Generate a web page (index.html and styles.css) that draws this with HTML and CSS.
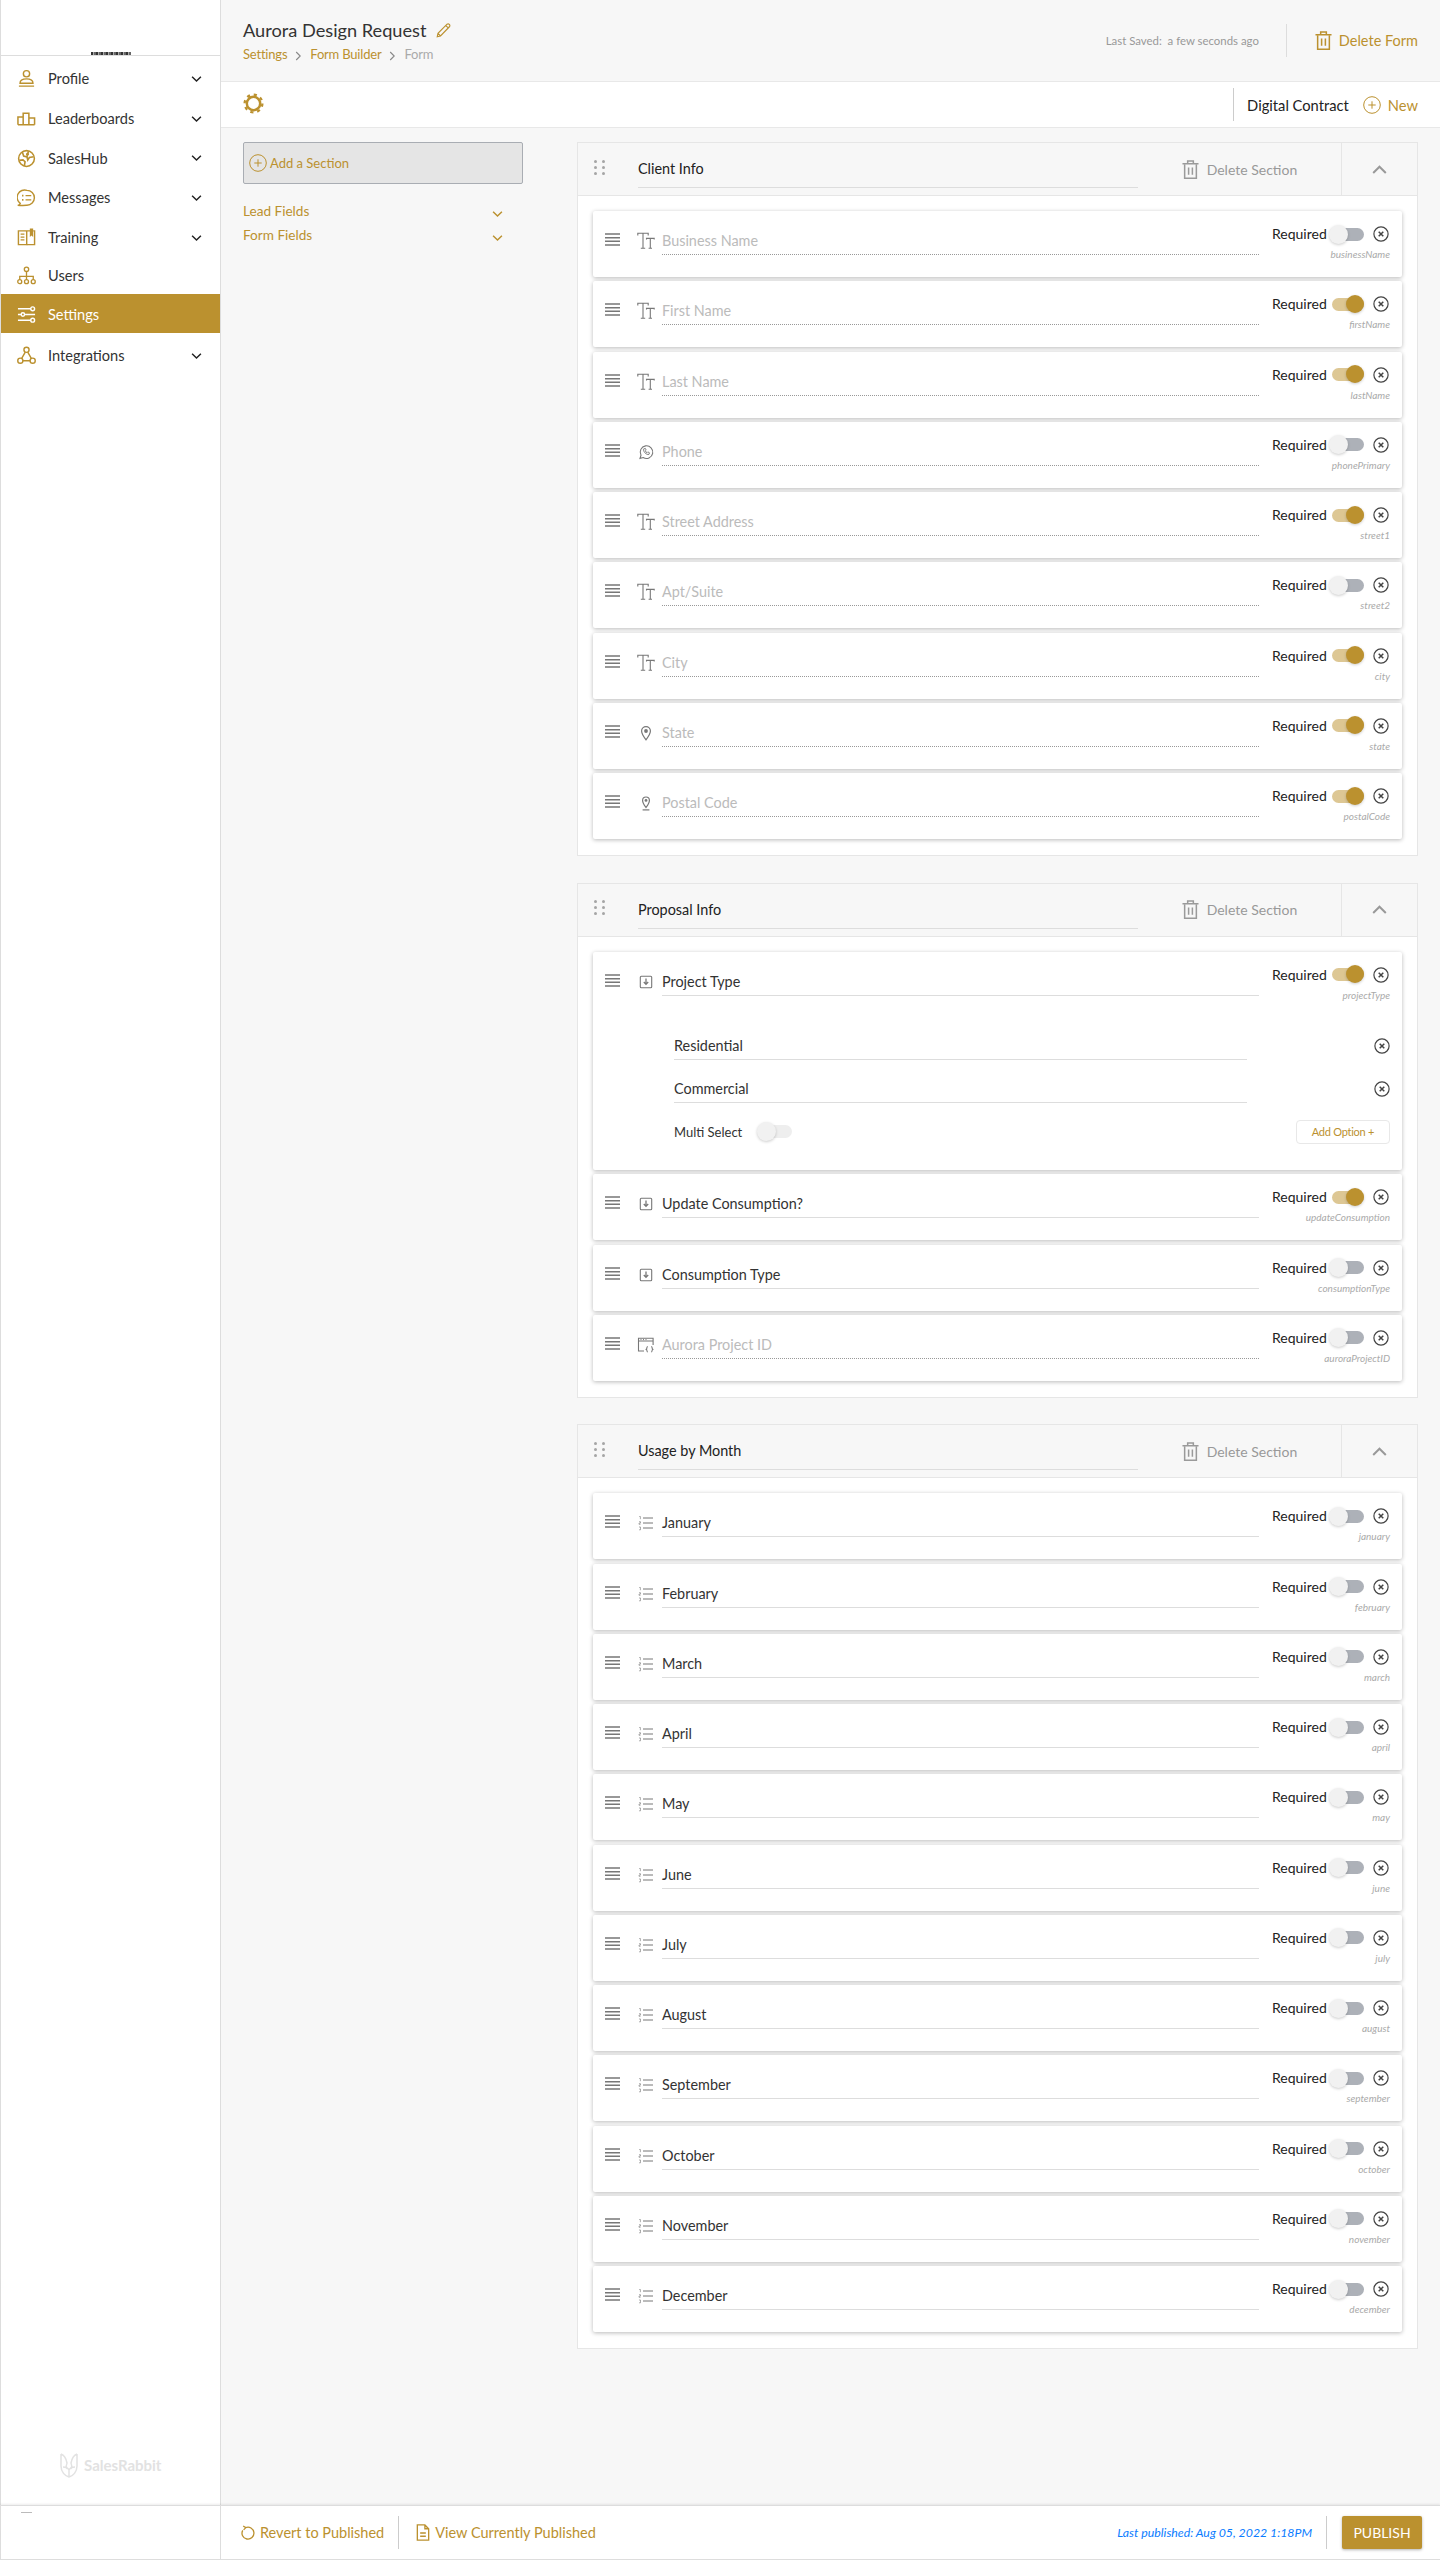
FILE: index.html
```html
<!DOCTYPE html>
<html lang="en">
<head>
<meta charset="utf-8">
<title>Aurora Design Request</title>
<link rel="stylesheet" href="styles.css">
</head>
<body>
<svg class="sprite" width="0" height="0" aria-hidden="true">
  <symbol id="i-handle" viewBox="0 0 15 13"><path d="M0 1h15M0 4.7h15M0 8.3h15M0 12h15" stroke="currentColor" stroke-width="1.6"/></symbol>
  <symbol id="i-dots" viewBox="0 0 11 15"><g fill="currentColor"><circle cx="1.5" cy="1.5" r="1.5"/><circle cx="9.5" cy="1.5" r="1.5"/><circle cx="1.5" cy="7.5" r="1.5"/><circle cx="9.5" cy="7.5" r="1.5"/><circle cx="1.5" cy="13.5" r="1.5"/><circle cx="9.5" cy="13.5" r="1.5"/></g></symbol>
  <symbol id="i-text" viewBox="0 0 18 18"><path d="M.8 3.4V1.2h10.4v2.2M6 1.2v14.6M3.800 16.200h4.400M9.500 7.600V6.400h7.700v1.200M13.300 6.400v9.400M11.600 16.200h3.400" fill="none" stroke="currentColor" stroke-width="1.100"/></symbol>
  <symbol id="i-phone" viewBox="0 0 18 18"><path d="M3 15.400l1-3.200A6.300 6.300 0 1 1 6.200 14.500z" fill="none" stroke="currentColor" stroke-width="1.100"/><path d="M6.700 5.900c-.9 2.500 2.600 6.300 5.300 5.500l.5-1.600-1.700-.9-.8.800c-.8-.4-1.400-1-1.700-1.900l.8-.7-.7-1.700z" fill="none" stroke="currentColor" stroke-width=".9"/></symbol>
  <symbol id="i-pin" viewBox="0 0 18 18"><path d="M9 15.800C6.600 12.600 4.600 10 4.600 7A4.400 4.400 0 0 1 13.400 7C13.400 10 11.400 12.600 9 15.800z" fill="none" stroke="currentColor" stroke-width="1.200"/><circle cx="9" cy="7" r="1.900" fill="currentColor"/></symbol>
  <symbol id="i-postal" viewBox="0 0 18 18"><path d="M9 13.400C7.200 11 5.600 9 5.600 6.400A3.400 3.400 0 0 1 12.400 6.400C12.400 9 10.800 11 9 13.400z" fill="none" stroke="currentColor" stroke-width="1.200"/><circle cx="9" cy="6.400" r="1.400" fill="currentColor"/><path d="M5.600 15.900h6.800" stroke="currentColor" stroke-width="1.200"/></symbol>
  <symbol id="i-select" viewBox="0 0 18 18"><rect x="3.300" y="3.300" width="11.400" height="11.400" rx="1" fill="none" stroke="currentColor" stroke-width="1.100"/><path d="M9 5.600v5.600M6.800 9l2.200 2.400L11.200 9" fill="none" stroke="currentColor" stroke-width="1.300"/></symbol>
  <symbol id="i-api" viewBox="0 0 18 18"><path d="M7 15H1.500V2.200h14.600V9M1.500 5h14.600" fill="none" stroke="currentColor" stroke-width="1.100"/><path d="M3.500 3.600h1M6 3.600h1M8.500 3.600h1" stroke="currentColor"/><path d="M10.800 10.500c-1.300 0-.6 2.300-1.500 2.700.9.400.2 2.700 1.500 2.700M14.200 10.500c1.300 0 .6 2.300 1.500 2.700-.9.400-.2 2.700-1.500 2.700" fill="none" stroke="currentColor" stroke-width="1.100"/></symbol>
  <symbol id="i-list" viewBox="0 0 18 18"><path d="M6 4h10M6 9h10M6 14h10" stroke="currentColor" stroke-width="1"/><path d="M2.200 2.500h1.200v2.700M2 7.700h1.500v1.400H2v1.200h1.500M2 13h1.500v2.800H2" fill="none" stroke="currentColor" stroke-width=".6"/></symbol>
  <symbol id="i-close" viewBox="0 0 16 16"><circle cx="8" cy="8" r="7.100" fill="none" stroke="currentColor" stroke-width="1.200"/><path d="M5.700 5.700l4.600 4.600M10.300 5.700l-4.600 4.600" stroke="currentColor" stroke-width="1.500"/></symbol>
  <symbol id="i-trash" viewBox="0 0 18 20"><path d="M.5 4h17M6 3.600V1h6v2.600" fill="none" stroke="currentColor" stroke-width="1.600"/><path d="M2.800 4.400v14.800h12.400V4.400" fill="none" stroke="currentColor" stroke-width="1.600"/><path d="M7 8v7.500M11 8v7.500" stroke="currentColor" stroke-width="1.600"/></symbol>
  <symbol id="i-plus" viewBox="0 0 18 18"><circle cx="9" cy="9" r="8.300" fill="none" stroke="currentColor"/><path d="M9 5.300v7.400M5.300 9h7.400" stroke="currentColor"/></symbol>
  <symbol id="i-down" viewBox="0 0 12 8"><path d="M1.200 1.500L6 6.200l4.800-4.700" fill="none" stroke="currentColor" stroke-width="1.600"/></symbol>
  <symbol id="i-up" viewBox="0 0 15 9"><path d="M1.200 8L7.500 1.700 13.800 8" fill="none" stroke="currentColor" stroke-width="2"/></symbol>
  <symbol id="i-right" viewBox="0 0 7 10"><path d="M1.200 1l4 4-4 4" fill="none" stroke="currentColor" stroke-width="1.100"/></symbol>
  <symbol id="n-profile" viewBox="0 0 20 20"><circle cx="10" cy="5" r="3.300" fill="none" stroke="currentColor" stroke-width="1.500"/><path d="M3.200 15c0-3.500 3-4.600 6.800-4.600s6.800 1.100 6.800 4.600zM2 18h16" fill="none" stroke="currentColor" stroke-width="1.500"/></symbol>
  <symbol id="n-board" viewBox="0 0 20 20"><path d="M1 16.500v-8h5.500v8M6.500 16.500v-12h6v12M12.500 16.500v-7h6v7M1 16.500h17.500" fill="none" stroke="currentColor" stroke-width="1.600"/></symbol>
  <symbol id="n-hub" viewBox="0 0 20 20"><circle cx="10" cy="10" r="8.300" fill="none" stroke="currentColor" stroke-width="1.600"/><path d="M5.500 3l1.500 4.500 3.500.8.800 3.200 1.700-2.600 4.500-.7M10.500 8.300L12 2.500M2.500 12l3.800-.6 2.200 2-.8 4.400" fill="none" stroke="currentColor" stroke-width="1.700"/><circle cx="11" cy="5.500" r="1.500" fill="currentColor"/></symbol>
  <symbol id="n-msg" viewBox="0 0 20 20"><path d="M.8 18.300c1.300-.4 2.200-1.100 2.600-2.100A7.800 7.800 0 0 1 10.500 2.500 7.800 7.800 0 1 1 10.500 18.100C7 18.300 4 18.500.8 18.300z" fill="none" stroke="currentColor" stroke-width="1.500"/><path d="M9 8h6M9 12.500h6" stroke="currentColor" stroke-width="1.500"/><path d="M5.300 8h1.500M5.300 12.500h1.500" stroke="currentColor" stroke-width="1.800"/></symbol>
  <symbol id="n-book" viewBox="0 0 20 20"><path d="M14 3H10.200v14.500H1.500V3H10" fill="none" stroke="currentColor" stroke-width="1.500"/><path d="M10.200 17.500h8.300V3H17" fill="none" stroke="currentColor" stroke-width="1.500"/><path d="M13.500 .5h3.500v9l-1.800-1.500-1.700 1.500z" fill="currentColor"/><path d="M3.800 6.500h4M3.800 9.500h4M3.800 12.500h4" stroke="currentColor" stroke-width="1.300"/></symbol>
  <symbol id="n-users" viewBox="0 0 20 20"><circle cx="10" cy="3.500" r="2.300" fill="none" stroke="currentColor" stroke-width="1.400"/><circle cx="2.900" cy="16.500" r="2.100" fill="none" stroke="currentColor" stroke-width="1.400"/><circle cx="10" cy="16.500" r="2.100" fill="none" stroke="currentColor" stroke-width="1.400"/><circle cx="17.100" cy="16.500" r="2.100" fill="none" stroke="currentColor" stroke-width="1.400"/><path d="M10 5.800v8.600M2.900 14.400v-3.400h14.200v3.400" fill="none" stroke="currentColor" stroke-width="1.400"/></symbol>
  <symbol id="n-sliders" viewBox="0 0 20 20"><g fill="none" stroke="currentColor" stroke-width="1.500"><path d="M1 4h13.500M1 10h3.500M8 10h11M1 16h13.500"/><circle cx="16.500" cy="4" r="2"/><circle cx="6.200" cy="10" r="1.800"/><circle cx="16.500" cy="16" r="2"/></g></symbol>
  <symbol id="n-net" viewBox="0 0 20 20"><g fill="none" stroke="currentColor" stroke-width="1.500"><circle cx="10" cy="4" r="2.700"/><circle cx="3.500" cy="15.500" r="2.700"/><circle cx="16.500" cy="15.500" r="2.700"/><path d="M8.700 6.400l-3.900 6.800M11.300 6.400l3.900 6.800M6.200 15.500h7.600"/></g></symbol>
  <symbol id="i-pencil" viewBox="0 0 16 16"><path d="M1.300 14.700l.8-3.700L11.800 1.300c.8-.6 1.700-.5 2.400.2.700.8.800 1.700.1 2.500L4.800 13.800zM10.500 2.700l2.800 2.800M2.100 11l2.700 2.800" fill="none" stroke="currentColor" stroke-width="1.200"/></symbol>
  <symbol id="i-gear" viewBox="0 0 22 22"><circle cx="11" cy="11" r="7" fill="none" stroke="currentColor" stroke-width="2.600"/><circle cx="11" cy="11" r="9.300" fill="none" stroke="currentColor" stroke-width="2.400" stroke-dasharray="3.300 4"/></symbol>
  <symbol id="i-revert" viewBox="0 0 16 18"><path d="M5.300 3.500A6.800 6.800 0 1 1 2 6.500M2.500 1.500L5.500 3.500 3 6" fill="none" stroke="currentColor" stroke-width="1.500"/></symbol>
  <symbol id="i-doc" viewBox="0 0 14 18"><path d="M1 1h8l4 4v12H1zM9 1v4h4" fill="none" stroke="currentColor" stroke-width="1.400"/><path d="M4 9.500h6M4 13h6" stroke="currentColor" stroke-width="1.400"/></symbol>
  <symbol id="i-rabbit" viewBox="0 0 18 26"><path d="M1 2c3 1 5 4 6 9-1 2-1 4 0 6M17 2c-3 1-5 4-6 9 1 2 1 4 0 6M1 2v12c0 6 4 10 8 11 4-1 8-5 8-11V2M9 25v-7M3 15c3 0 5 1 6 3 1-2 3-3 6-3" fill="none" stroke="currentColor" stroke-width="1.500"/></symbol>
</svg>

<div class="app">
  <div class="top">
    <aside class="sidebar">
      <div class="brand"><span class="brand-strip"></span></div>
      <nav class="nav">
        <a class="nav-item"><svg class="nav-icon"><use href="#n-profile"/></svg><span class="nav-label">Profile</span><svg class="nav-chev"><use href="#i-down"/></svg></a>
        <a class="nav-item"><svg class="nav-icon"><use href="#n-board"/></svg><span class="nav-label">Leaderboards</span><svg class="nav-chev"><use href="#i-down"/></svg></a>
        <a class="nav-item"><svg class="nav-icon"><use href="#n-hub"/></svg><span class="nav-label">SalesHub</span><svg class="nav-chev"><use href="#i-down"/></svg></a>
        <a class="nav-item"><svg class="nav-icon"><use href="#n-msg"/></svg><span class="nav-label">Messages</span><svg class="nav-chev"><use href="#i-down"/></svg></a>
        <a class="nav-item"><svg class="nav-icon"><use href="#n-book"/></svg><span class="nav-label">Training</span><svg class="nav-chev"><use href="#i-down"/></svg></a>
        <a class="nav-item nav-plain"><svg class="nav-icon"><use href="#n-users"/></svg><span class="nav-label">Users</span></a>
        <a class="nav-item nav-active"><svg class="nav-icon"><use href="#n-sliders"/></svg><span class="nav-label">Settings</span></a>
        <a class="nav-item nav-last"><svg class="nav-icon"><use href="#n-net"/></svg><span class="nav-label">Integrations</span><svg class="nav-chev"><use href="#i-down"/></svg></a>
      </nav>
      <div class="side-logo"><svg class="rabbit"><use href="#i-rabbit"/></svg><span>SalesRabbit</span></div>
    </aside>

    <main class="main">
      <header class="header">
        <div class="header-left">
          <div class="title-row"><h1 class="title">Aurora Design Request</h1><svg class="pencil"><use href="#i-pencil"/></svg></div>
          <div class="crumbs"><a>Settings</a><svg class="crumb-sep"><use href="#i-right"/></svg><a>Form Builder</a><svg class="crumb-sep"><use href="#i-right"/></svg><span>Form</span></div>
        </div>
        <div class="header-right">
          <span class="saved">Last Saved:&nbsp; a few seconds ago</span>
          <a class="delete-form"><svg class="trash-lg"><use href="#i-trash"/></svg>Delete Form</a>
        </div>
      </header>

      <div class="toolbar">
        <svg class="gear"><use href="#i-gear"/></svg>
        <div class="toolbar-right"><span class="contract">Digital Contract</span><svg class="plus"><use href="#i-plus"/></svg><a class="new">New</a></div>
      </div>

      <div class="content">
        <div class="left">
          <div class="add-section"><svg class="plus"><use href="#i-plus"/></svg><span>Add a Section</span></div>
          <div class="group-link"><span>Lead Fields</span><svg class="group-chev"><use href="#i-down"/></svg></div>
          <div class="group-link"><span>Form Fields</span><svg class="group-chev"><use href="#i-down"/></svg></div>
        </div>

        <div class="sections">
          <section class="section">
            <div class="sec-head"><svg class="dots"><use href="#i-dots"/></svg><div class="sec-title">Client Info</div><div class="sec-del"><svg class="trash"><use href="#i-trash"/></svg>Delete Section</div><div class="sec-toggle"><svg class="up"><use href="#i-up"/></svg></div></div>
            <div class="sec-body">
              <div class="card"><svg class="handle"><use href="#i-handle"/></svg><svg class="type"><use href="#i-text"/></svg><div class="field ph">Business Name</div><div class="side"><div class="side-row"><span class="req">Required</span><span class="toggle"></span><svg class="close"><use href="#i-close"/></svg></div><div class="key">businessName</div></div></div>
              <div class="card"><svg class="handle"><use href="#i-handle"/></svg><svg class="type"><use href="#i-text"/></svg><div class="field ph">First Name</div><div class="side"><div class="side-row"><span class="req">Required</span><span class="toggle on"></span><svg class="close"><use href="#i-close"/></svg></div><div class="key">firstName</div></div></div>
              <div class="card"><svg class="handle"><use href="#i-handle"/></svg><svg class="type"><use href="#i-text"/></svg><div class="field ph">Last Name</div><div class="side"><div class="side-row"><span class="req">Required</span><span class="toggle on"></span><svg class="close"><use href="#i-close"/></svg></div><div class="key">lastName</div></div></div>
              <div class="card"><svg class="handle"><use href="#i-handle"/></svg><svg class="type"><use href="#i-phone"/></svg><div class="field ph">Phone</div><div class="side"><div class="side-row"><span class="req">Required</span><span class="toggle"></span><svg class="close"><use href="#i-close"/></svg></div><div class="key">phonePrimary</div></div></div>
              <div class="card"><svg class="handle"><use href="#i-handle"/></svg><svg class="type"><use href="#i-text"/></svg><div class="field ph">Street Address</div><div class="side"><div class="side-row"><span class="req">Required</span><span class="toggle on"></span><svg class="close"><use href="#i-close"/></svg></div><div class="key">street1</div></div></div>
              <div class="card"><svg class="handle"><use href="#i-handle"/></svg><svg class="type"><use href="#i-text"/></svg><div class="field ph">Apt/Suite</div><div class="side"><div class="side-row"><span class="req">Required</span><span class="toggle"></span><svg class="close"><use href="#i-close"/></svg></div><div class="key">street2</div></div></div>
              <div class="card"><svg class="handle"><use href="#i-handle"/></svg><svg class="type"><use href="#i-text"/></svg><div class="field ph">City</div><div class="side"><div class="side-row"><span class="req">Required</span><span class="toggle on"></span><svg class="close"><use href="#i-close"/></svg></div><div class="key">city</div></div></div>
              <div class="card"><svg class="handle"><use href="#i-handle"/></svg><svg class="type"><use href="#i-pin"/></svg><div class="field ph">State</div><div class="side"><div class="side-row"><span class="req">Required</span><span class="toggle on"></span><svg class="close"><use href="#i-close"/></svg></div><div class="key">state</div></div></div>
              <div class="card"><svg class="handle"><use href="#i-handle"/></svg><svg class="type"><use href="#i-postal"/></svg><div class="field ph">Postal Code</div><div class="side"><div class="side-row"><span class="req">Required</span><span class="toggle on"></span><svg class="close"><use href="#i-close"/></svg></div><div class="key">postalCode</div></div></div>
            </div>
          </section>

          <section class="section">
            <div class="sec-head"><svg class="dots"><use href="#i-dots"/></svg><div class="sec-title">Proposal Info</div><div class="sec-del"><svg class="trash"><use href="#i-trash"/></svg>Delete Section</div><div class="sec-toggle"><svg class="up"><use href="#i-up"/></svg></div></div>
            <div class="sec-body">
              <div class="card card-open">
                <div class="card-main"><svg class="handle"><use href="#i-handle"/></svg><svg class="type"><use href="#i-select"/></svg><div class="field">Project Type</div><div class="side"><div class="side-row"><span class="req">Required</span><span class="toggle on"></span><svg class="close"><use href="#i-close"/></svg></div><div class="key">projectType</div></div></div>
                <div class="options">
                  <div class="option"><div class="opt-field">Residential</div><svg class="close"><use href="#i-close"/></svg></div>
                  <div class="option"><div class="opt-field">Commercial</div><svg class="close"><use href="#i-close"/></svg></div>
                  <div class="opt-foot"><span class="multi">Multi Select</span><span class="toggle pale"></span><button class="add-opt">Add Option +</button></div>
                </div>
              </div>
              <div class="card"><svg class="handle"><use href="#i-handle"/></svg><svg class="type"><use href="#i-select"/></svg><div class="field">Update Consumption?</div><div class="side"><div class="side-row"><span class="req">Required</span><span class="toggle on"></span><svg class="close"><use href="#i-close"/></svg></div><div class="key">updateConsumption</div></div></div>
              <div class="card"><svg class="handle"><use href="#i-handle"/></svg><svg class="type"><use href="#i-select"/></svg><div class="field">Consumption Type</div><div class="side"><div class="side-row"><span class="req">Required</span><span class="toggle"></span><svg class="close"><use href="#i-close"/></svg></div><div class="key">consumptionType</div></div></div>
              <div class="card"><svg class="handle"><use href="#i-handle"/></svg><svg class="type"><use href="#i-api"/></svg><div class="field ph">Aurora Project ID</div><div class="side"><div class="side-row"><span class="req">Required</span><span class="toggle"></span><svg class="close"><use href="#i-close"/></svg></div><div class="key">auroraProjectID</div></div></div>
            </div>
          </section>

          <section class="section">
            <div class="sec-head"><svg class="dots"><use href="#i-dots"/></svg><div class="sec-title">Usage by Month</div><div class="sec-del"><svg class="trash"><use href="#i-trash"/></svg>Delete Section</div><div class="sec-toggle"><svg class="up"><use href="#i-up"/></svg></div></div>
            <div class="sec-body">
              <div class="card"><svg class="handle"><use href="#i-handle"/></svg><svg class="type"><use href="#i-list"/></svg><div class="field">January</div><div class="side"><div class="side-row"><span class="req">Required</span><span class="toggle"></span><svg class="close"><use href="#i-close"/></svg></div><div class="key">january</div></div></div>
              <div class="card"><svg class="handle"><use href="#i-handle"/></svg><svg class="type"><use href="#i-list"/></svg><div class="field">February</div><div class="side"><div class="side-row"><span class="req">Required</span><span class="toggle"></span><svg class="close"><use href="#i-close"/></svg></div><div class="key">february</div></div></div>
              <div class="card"><svg class="handle"><use href="#i-handle"/></svg><svg class="type"><use href="#i-list"/></svg><div class="field">March</div><div class="side"><div class="side-row"><span class="req">Required</span><span class="toggle"></span><svg class="close"><use href="#i-close"/></svg></div><div class="key">march</div></div></div>
              <div class="card"><svg class="handle"><use href="#i-handle"/></svg><svg class="type"><use href="#i-list"/></svg><div class="field">April</div><div class="side"><div class="side-row"><span class="req">Required</span><span class="toggle"></span><svg class="close"><use href="#i-close"/></svg></div><div class="key">april</div></div></div>
              <div class="card"><svg class="handle"><use href="#i-handle"/></svg><svg class="type"><use href="#i-list"/></svg><div class="field">May</div><div class="side"><div class="side-row"><span class="req">Required</span><span class="toggle"></span><svg class="close"><use href="#i-close"/></svg></div><div class="key">may</div></div></div>
              <div class="card"><svg class="handle"><use href="#i-handle"/></svg><svg class="type"><use href="#i-list"/></svg><div class="field">June</div><div class="side"><div class="side-row"><span class="req">Required</span><span class="toggle"></span><svg class="close"><use href="#i-close"/></svg></div><div class="key">june</div></div></div>
              <div class="card"><svg class="handle"><use href="#i-handle"/></svg><svg class="type"><use href="#i-list"/></svg><div class="field">July</div><div class="side"><div class="side-row"><span class="req">Required</span><span class="toggle"></span><svg class="close"><use href="#i-close"/></svg></div><div class="key">july</div></div></div>
              <div class="card"><svg class="handle"><use href="#i-handle"/></svg><svg class="type"><use href="#i-list"/></svg><div class="field">August</div><div class="side"><div class="side-row"><span class="req">Required</span><span class="toggle"></span><svg class="close"><use href="#i-close"/></svg></div><div class="key">august</div></div></div>
              <div class="card"><svg class="handle"><use href="#i-handle"/></svg><svg class="type"><use href="#i-list"/></svg><div class="field">September</div><div class="side"><div class="side-row"><span class="req">Required</span><span class="toggle"></span><svg class="close"><use href="#i-close"/></svg></div><div class="key">september</div></div></div>
              <div class="card"><svg class="handle"><use href="#i-handle"/></svg><svg class="type"><use href="#i-list"/></svg><div class="field">October</div><div class="side"><div class="side-row"><span class="req">Required</span><span class="toggle"></span><svg class="close"><use href="#i-close"/></svg></div><div class="key">october</div></div></div>
              <div class="card"><svg class="handle"><use href="#i-handle"/></svg><svg class="type"><use href="#i-list"/></svg><div class="field">November</div><div class="side"><div class="side-row"><span class="req">Required</span><span class="toggle"></span><svg class="close"><use href="#i-close"/></svg></div><div class="key">november</div></div></div>
              <div class="card"><svg class="handle"><use href="#i-handle"/></svg><svg class="type"><use href="#i-list"/></svg><div class="field">December</div><div class="side"><div class="side-row"><span class="req">Required</span><span class="toggle"></span><svg class="close"><use href="#i-close"/></svg></div><div class="key">december</div></div></div>
            </div>
          </section>
        </div>
      </div>
    </main>
  </div>

  <footer class="footer">
    <div class="foot-side"><span class="foot-dash"></span></div>
    <div class="foot-main">
      <a class="foot-link foot-revert"><svg class="foot-icon"><use href="#i-revert"/></svg>Revert to Published</a>
      <a class="foot-link foot-view"><svg class="foot-icon"><use href="#i-doc"/></svg>View Currently Published</a>
      <span class="published">Last published: Aug 05, 2022 1:18PM</span>
      <button class="publish">PUBLISH</button>
    </div>
  </footer>
</div>
</body>
</html>
```

FILE: styles.css
```css
* { box-sizing: border-box; }
html, body { margin: 0; padding: 0; }
body { font-family: Lato, "Open Sans", sans-serif; color: #333; background: #f7f7f7; font-size: 14.4px; }
svg { display: block; flex: none; }
.sprite { position: absolute; }
a { cursor: pointer; }
h1 { margin: 0; font-weight: 400; }

.app { display: flex; flex-direction: column; height: 2560px; overflow: hidden; }
.top { display: flex; flex: 1; min-height: 0; }

/* sidebar */
.sidebar { width: 221px; flex: none; display: flex; flex-direction: column; background: #fff; border-left: 1px solid #ddd; border-right: 1px solid #ddd; }
.brand { height: 56px; flex: none; border-bottom: 1px solid #ddd; display: flex; justify-content: center; align-items: flex-end; }
.brand-strip { width: 40px; height: 3px; background: repeating-linear-gradient(90deg, #333 0 2px, #aaa 2px 3px, #666 3px 5px); }
.nav { padding-top: 3px; display: flex; flex-direction: column; }
.nav-item { height: 39.7px; display: flex; align-items: center; padding: 0 18px 0 16px; color: #333; }
.nav-plain { height: 36.5px; }
.nav-active { height: 39px; background: #bb912f; color: #fff; padding-top: 2px; }
.nav-active .nav-icon { color: #fff; }
.nav-last { margin-top: 3px; }
.nav-icon { width: 19px; height: 19px; color: #bb912f; }
.nav-label { margin-left: 12px; flex: 1; font-size: 14.6px; }
.nav-chev { width: 11px; height: 8px; color: #222; }
.side-logo { margin-top: auto; margin-bottom: 27px; display: flex; align-items: center; padding-left: 59px; gap: 6px; color: #e2e2e2; font-size: 15px; font-weight: 700; }
.rabbit { width: 18px; height: 26px; }

/* header */
.main { flex: 1; min-width: 0; display: flex; flex-direction: column; }
.header { height: 82px; flex: none; border-bottom: 1px solid #e8e8e8; display: flex; justify-content: space-between; align-items: center; padding: 0 22px; }
.title-row { display: flex; align-items: center; }
.title { font-size: 18.2px; line-height: 24px; color: #333; }
.pencil { width: 15px; height: 15px; margin-left: 9px; color: #bb912f; }
.crumbs { display: flex; align-items: center; font-size: 13px; letter-spacing: -.2px; line-height: 18px; margin-top: 3px; color: #bb912f; }
.crumbs span { color: #aaa; }
.crumb-sep { width: 7px; height: 10px; margin: 3px 8px 0 8px; color: #888; }
.header-right { display: flex; align-items: center; }
.saved { font-size: 11.4px; color: #999; padding-right: 27px; }
.delete-form { display: flex; align-items: center; height: 33px; padding-left: 28px; border-left: 1px solid #ddd; color: #bb912f; font-size: 14.5px; }
.trash-lg { width: 17px; height: 19px; margin-right: 7px; }

/* toolbar */
.toolbar { height: 46px; flex: none; background: #fff; border-bottom: 1px solid #e8e8e8; display: flex; justify-content: space-between; padding: 0 22px; }
.gear { width: 21px; height: 21px; color: #bb912f; margin-top: 11px; }
.toolbar-right { height: 33px; border-left: 1px solid #ccc; padding-left: 13px; display: flex; align-items: center; margin-top: 6px; }
.contract { color: #222; font-size: 14.7px; }
.plus { width: 18px; height: 18px; color: #bb912f; }
.toolbar-right .plus { margin: 0 7px 0 14px; }
.new { color: #bb912f; font-size: 14.7px; }

/* content */
.content { flex: 1; display: flex; padding: 14px 22px 0; align-items: flex-start; }
.left { width: 280px; flex: none; }
.add-section { height: 42px; display: flex; align-items: center; padding-left: 5px; gap: 3px; background: #e5e5e5; border: 1px solid #a9adb3; border-radius: 2px; color: #bb912f; font-size: 13px; }
.group-link { display: flex; justify-content: space-between; align-items: center; height: 24px; color: #bb912f; font-size: 13.6px; width: 260px; }
.add-section + .group-link { margin-top: 15px; }
.group-chev { width: 11px; height: 8px; margin-top: 5px; }
.sections { margin-left: 54px; width: 841px; flex: none; display: flex; flex-direction: column; gap: 26.5px; }
.section { background: #fff; border: 1px solid #e6e6e6; }
.sec-head { height: 53px; display: flex; align-items: center; background: #f7f7f7; border-bottom: 1px solid #e6e6e6; padding-left: 16px; }
.dots { width: 11px; height: 15px; color: #a5a5a5; margin-top: -4px; }
.sec-title { width: 501px; margin-left: 33px; height: 34px; padding: 5px 0 0; line-height: 19px; border-bottom: 1px solid #ddd; color: #222; margin-top: 4px; }
.sec-del { margin-left: 44px; display: flex; align-items: center; gap: 8px; color: #999; width: 160px; font-size: 14px; }
.trash { width: 17px; height: 19px; color: #9a9a9a; }
.sec-toggle { width: 76px; align-self: stretch; border-left: 1px solid #e6e6e6; display: flex; align-items: center; justify-content: center; color: #999; }
.up { width: 15px; height: 9px; }
.sec-body { padding: 15px 15px 16px; display: flex; flex-direction: column; gap: 4.25px; }

/* cards */
.card { height: 66px; display: flex; align-items: flex-start; background: #fff; border-radius: 2px; box-shadow: 0 1px 4px rgba(0,0,0,.28); padding-left: 12px; }
.handle { width: 15px; height: 13px; margin-top: 22px; color: #777; }
.type { width: 18px; height: 18px; margin: 21px 0 0 17px; color: #777; }
.field { width: 597px; height: 24px; margin: 20px 0 0 7px; line-height: 20px; border-bottom: 1px solid #ddd; color: #333; }
.field.ph { color: #bbb; border-bottom: 1px dotted #999; }
.side { margin-left: 13px; width: 118px; padding-top: 14px; display: flex; flex-direction: column; }
.side-row { display: flex; align-items: center; height: 18px; }
.req { color: #222; font-size: 14px; line-height: 18px; width: 57px; flex: none; }
.toggle { position: relative; width: 32px; height: 13px; margin-left: 3px; border-radius: 7px; background: #adb1b8; flex: none; }
.toggle::after { content: ""; position: absolute; left: -3px; top: -3px; width: 19px; height: 19px; border-radius: 50%; background: #f1f1f1; box-shadow: 0 1px 3px rgba(0,0,0,.2); }
.toggle.on { background: #ddc794; }
.toggle.on::after { left: 14px; width: 18px; height: 18px; background: #bb912f; }
.toggle.pale { background: #eee; }
.close { width: 16px; height: 16px; margin-left: 9px; color: #444; }
.key { text-align: right; font-style: italic; font-size: 10px; color: #aaa; line-height: 14px; margin-top: 4px; }

.card-open { height: 218.5px; display: block; padding-left: 0; }
.card-main { display: flex; align-items: flex-start; height: 66px; padding-left: 12px; }
.options { padding: 18px 12px 0 81px; }
.option { display: flex; justify-content: space-between; height: 43px; }
.opt-field { width: 573px; height: 24px; line-height: 20px; border-bottom: 1px solid #ddd; color: #333; }
.option .close { margin: 2px 0 0 0; }
.opt-foot { display: flex; align-items: center; height: 24px; margin-top: -2px; }
.multi { font-size: 13px; color: #333; width: 83px; }
.add-opt { margin-left: auto; width: 94px; height: 24px; border: 1px solid #e8e8e8; border-radius: 4px; background: #fff; color: #bb912f; font: 11px Lato, sans-serif; letter-spacing: -.25px; padding: 0; }

/* footer */
.footer { height: 55px; flex: none; display: flex; background: #fff; border-top: 1px solid #ddd; border-bottom: 1px solid #ddd; box-shadow: 0 -1px 2px rgba(0,0,0,.08); }
.foot-side { width: 221px; flex: none; border-left: 1px solid #ddd; border-right: 1px solid #ddd; padding: 6px 0 0 20px; }
.foot-dash { display: block; width: 11px; height: 1px; background: #bbb; }
.foot-main { flex: 1; display: flex; align-items: center; padding: 0 18px 0 20px; }
.foot-link { display: flex; align-items: center; height: 33px; color: #bb912f; font-size: 14.5px; }
.foot-icon { width: 14px; height: 17px; margin-right: 5px; }
.foot-revert { padding-right: 14px; border-right: 1px solid #ccc; }
.foot-view { padding-left: 17px; }
.published { margin-left: auto; height: 33px; line-height: 33px; padding-right: 14px; border-right: 1px solid #ccc; font-style: italic; font-size: 12.3px; color: #0a7cff; }
.publish { margin-left: 15px; width: 80px; height: 33px; background: #bb912f; color: #fff; border: 0; border-radius: 2px; font: 14px Lato, sans-serif; box-shadow: 0 1px 3px rgba(0,0,0,.3); padding: 0; }
```
